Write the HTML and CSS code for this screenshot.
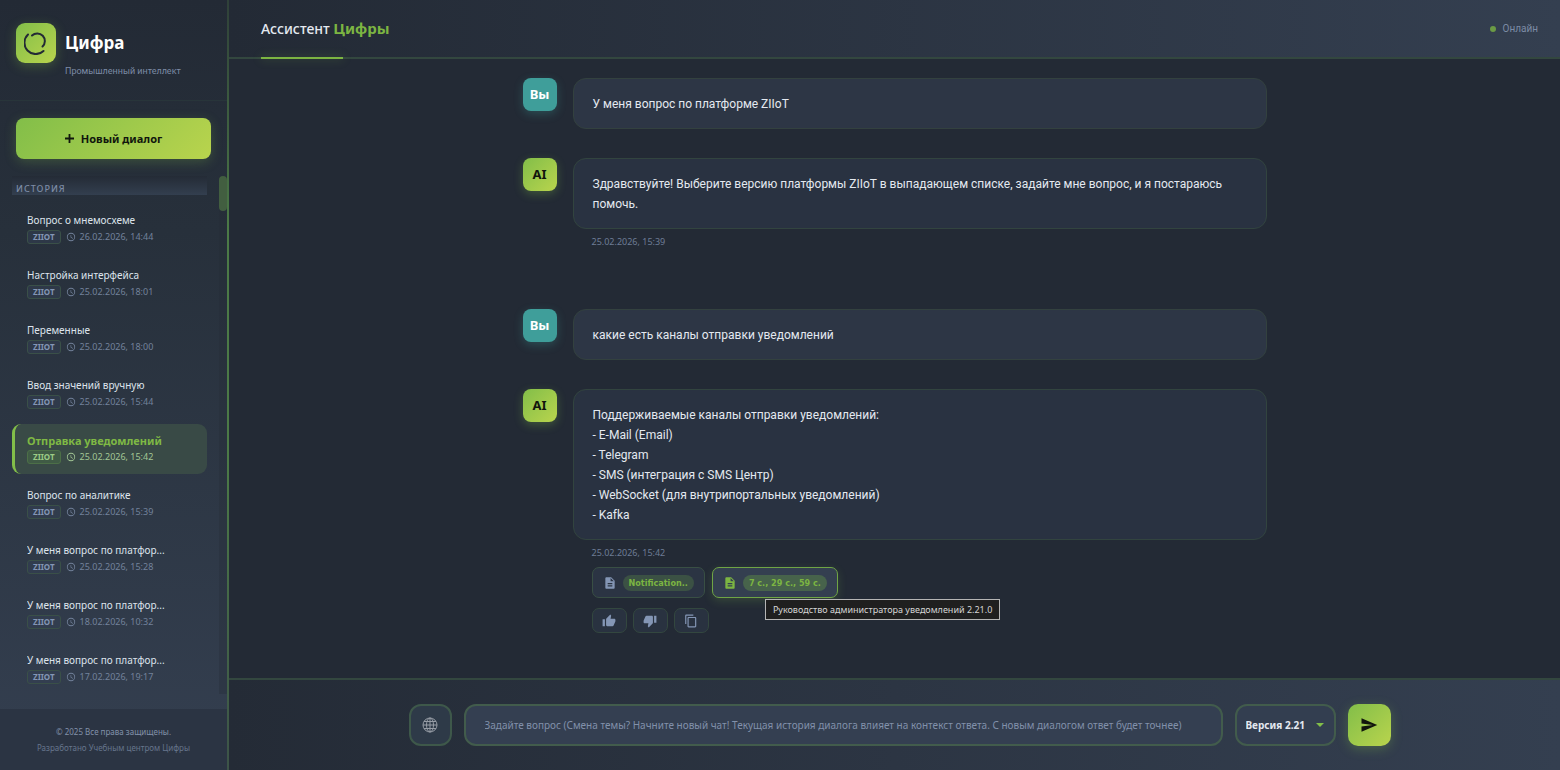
FILE: index.html
```html
<!DOCTYPE html>
<html lang="ru">
<head>
    <meta charset="UTF-8">
    <meta name="viewport" content="width=device-width, initial-scale=1.0">
    <title>Ассистент Цифры</title>
    <link rel="stylesheet" href="styles.css">
</head>
<body>
    <!-- Shared icons -->
    <svg class="sprite" aria-hidden="true">
        <symbol id="clock" viewBox="0 0 24 24"><path fill="currentColor" d="M12 2a10 10 0 1 0 0 20 10 10 0 0 0 0-20zm0 18a8 8 0 1 1 0-16 8 8 0 0 1 0 16zm.5-13H11v6l5.2 3.2.8-1.3-4.5-2.7z"/></symbol>
        <symbol id="doc" viewBox="0 0 24 24"><path fill="currentColor" d="M14 2H6c-1.100 0-2 .9-2 2v16c0 1.100.9 2 2 2h12c1.100 0 2-.9 2-2V8l-6-6zm2 16H8v-2h8v2zm0-4H8v-2h8v2zm-3-5V3.500L18.500 9H13z"/></symbol>
    </svg>

    <div class="app">
        <aside class="sidebar">
            <div class="sidebar-header">
                <div class="logo">
                    <svg width="24" height="24" viewBox="0 0 24 24" fill="none" stroke="#232a35" stroke-linecap="round">
                        <path stroke-width="2" d="M4 3.500A10 10 0 0 0 19.500 20"/>
                        <path stroke-width="2" d="M8 4.500A7.500 7.500 0 0 1 18.500 15.500"/>
                    </svg>
                </div>
                <div>
                    <h1 class="brand">Цифра</h1>
                    <p class="brand-sub">Промышленный интеллект</p>
                </div>
            </div>
            <div class="new-chat-wrap">
                <button class="new-chat-btn">
                    <svg width="9" height="9" viewBox="0 0 10 10"><path stroke="#11160d" stroke-width="2" d="M5 0v10M0 5h10"/></svg>
                    Новый диалог
                </button>
            </div>
            <div class="history">
                <div class="history-list">
                    <h2 class="history-title">История</h2>
                    <a class="history-item" href="#">
                        <span class="item-title">Вопрос о мнемосхеме</span>
                        <span class="item-meta"><span class="tag">ZIIOT</span><svg class="clock"><use href="#clock"/></svg>26.02.2026, 14:44</span>
                    </a>
                    <a class="history-item" href="#">
                        <span class="item-title">Настройка интерфейса</span>
                        <span class="item-meta"><span class="tag">ZIIOT</span><svg class="clock"><use href="#clock"/></svg>25.02.2026, 18:01</span>
                    </a>
                    <a class="history-item" href="#">
                        <span class="item-title">Переменные</span>
                        <span class="item-meta"><span class="tag">ZIIOT</span><svg class="clock"><use href="#clock"/></svg>25.02.2026, 18:00</span>
                    </a>
                    <a class="history-item" href="#">
                        <span class="item-title">Ввод значений вручную</span>
                        <span class="item-meta"><span class="tag">ZIIOT</span><svg class="clock"><use href="#clock"/></svg>25.02.2026, 15:44</span>
                    </a>
                    <a class="history-item active" href="#">
                        <span class="item-title">Отправка уведомлений</span>
                        <span class="item-meta"><span class="tag">ZIIOT</span><svg class="clock"><use href="#clock"/></svg>25.02.2026, 15:42</span>
                    </a>
                    <a class="history-item" href="#">
                        <span class="item-title">Вопрос по аналитике</span>
                        <span class="item-meta"><span class="tag">ZIIOT</span><svg class="clock"><use href="#clock"/></svg>25.02.2026, 15:39</span>
                    </a>
                    <a class="history-item" href="#">
                        <span class="item-title">У меня вопрос по платфор...</span>
                        <span class="item-meta"><span class="tag">ZIIOT</span><svg class="clock"><use href="#clock"/></svg>25.02.2026, 15:28</span>
                    </a>
                    <a class="history-item" href="#">
                        <span class="item-title">У меня вопрос по платфор...</span>
                        <span class="item-meta"><span class="tag">ZIIOT</span><svg class="clock"><use href="#clock"/></svg>18.02.2026, 10:32</span>
                    </a>
                    <a class="history-item" href="#">
                        <span class="item-title">У меня вопрос по платфор...</span>
                        <span class="item-meta"><span class="tag">ZIIOT</span><svg class="clock"><use href="#clock"/></svg>17.02.2026, 19:17</span>
                    </a>
                </div>
                <div class="scroll-track"><div class="scroll-thumb"></div></div>
            </div>
            <footer class="sidebar-footer">
                <p class="copyright">© 2025 Все права защищены.</p>
                <p class="developer">Разработано Учебным центром Цифры</p>
            </footer>
        </aside>

        <main class="main">
            <header class="chat-header">
                <h2 class="chat-title">Ассистент <span>Цифры</span></h2>
                <div class="status"><span class="status-dot"></span>Онлайн</div>
            </header>

            <div class="chat">
                <div class="messages">
                    <div class="message user">
                        <div class="avatar">Вы</div>
                        <div class="content">
                            <div class="bubble">У меня вопрос по платформе ZIIoT</div>
                        </div>
                    </div>
                    <div class="message ai">
                        <div class="avatar">AI</div>
                        <div class="content">
                            <div class="bubble">Здравствуйте! Выберите версию платформы ZIIoT в выпадающем списке, задайте мне вопрос, и я постараюсь помочь.</div>
                            <div class="time">25.02.2026, 15:39</div>
                        </div>
                    </div>
                    <div class="message user">
                        <div class="avatar">Вы</div>
                        <div class="content">
                            <div class="bubble">какие есть каналы отправки уведомлений</div>
                        </div>
                    </div>
                    <div class="message ai">
                        <div class="avatar">AI</div>
                        <div class="content">
                            <div class="bubble">Поддерживаемые каналы отправки уведомлений:<br>- E-Mail (Email)<br>- Telegram<br>- SMS (интеграция с SMS Центр)<br>- WebSocket (для внутрипортальных уведомлений)<br>- Kafka</div>
                            <div class="time">25.02.2026, 15:42</div>
                            <div class="sources">
                                <button class="source-btn"><svg class="doc"><use href="#doc"/></svg><span class="pages">Notification..</span></button>
                                <button class="source-btn hovered"><svg class="doc"><use href="#doc"/></svg><span class="pages">7 с., 29 с., 59 с.</span><span class="tooltip" role="tooltip">Руководство администратора уведомлений 2.21.0</span></button>
                            </div>
                            <div class="feedback">
                                <button class="icon-btn" aria-label="Нравится">
                                    <svg width="14" height="14" viewBox="0 0 24 24"><path fill="currentColor" d="M1 21h4V9H1v12zm22-11c0-1.100-.9-2-2-2h-6.310l.95-4.570.03-.32c0-.41-.17-.79-.44-1.060L14.170 1 7.590 7.590C7.220 7.950 7 8.450 7 9v10c0 1.100.9 2 2 2h9c.83 0 1.540-.5 1.840-1.220l3.020-7.050c.09-.23.14-.47.14-.73v-2z"/></svg>
                                </button>
                                <button class="icon-btn" aria-label="Не нравится">
                                    <svg width="14" height="14" viewBox="0 0 24 24"><path fill="currentColor" d="M15 3H6c-.83 0-1.540.5-1.840 1.220l-3.020 7.050c-.09.23-.14.47-.14.73v2c0 1.100.9 2 2 2h6.310l-.95 4.570-.03.32c0 .41.17.79.44 1.060L9.830 23l6.590-6.590c.36-.36.58-.86.58-1.410V5c0-1.100-.9-2-2-2zm4 0v12h4V3h-4z"/></svg>
                                </button>
                                <button class="icon-btn" aria-label="Копировать">
                                    <svg width="14" height="14" viewBox="0 0 24 24"><path fill="currentColor" d="M16 1H4c-1.100 0-2 .9-2 2v14h2V3h12V1zm3 4H8c-1.100 0-2 .9-2 2v14c0 1.100.9 2 2 2h11c1.100 0 2-.9 2-2V7c0-1.100-.9-2-2-2zm0 16H8V7h11v14z"/></svg>
                                </button>
                            </div>
                        </div>
                    </div>
                </div>
            </div>

            <div class="input-area">
                <form class="input-form">
                    <button type="button" class="globe-btn" aria-label="Поиск">
                        <svg width="16" height="16" viewBox="0 0 16 16" fill="none" stroke="#969ca5">
                            <circle cx="8" cy="8" r="7"/>
                            <ellipse cx="8" cy="8" rx="3.500" ry="7"/>
                            <path d="M8 1v14M1 8h14M2 4.500h12M2 11.500h12"/>
                        </svg>
                    </button>
                    <input type="text" class="question" aria-label="Вопрос" placeholder="Задайте вопрос (Смена темы? Начните новый чат! Текущая история диалога влияет на контекст ответа. С новым диалогом ответ будет точнее)">
                    <div class="version">
                        <select class="version-select" aria-label="Версия">
                            <option>Версия 2.21</option>
                        </select>
                        <svg class="version-arrow" width="8" height="4" viewBox="0 0 8 4"><path fill="#82be49" d="M0 0h8L4 4z"/></svg>
                    </div>
                    <button type="button" class="send-btn" aria-label="Отправить">
                        <svg width="18" height="18" viewBox="0 0 24 24"><path fill="#11160d" d="M2 21l21-9L2 3v7l15 2-15 2z"/></svg>
                    </button>
                </form>
            </div>
        </main>
    </div>
</body>
</html>
```
FILE: styles.css
```css
* {
    box-sizing: border-box;
    margin: 0;
    padding: 0;
}

body {
    font-family: "Noto Sans", sans-serif;
    font-size: 12px;
    color: #e4e9f0;
    background-color: #232a35;
}

button, input, select {
    font-family: inherit;
    cursor: pointer;
}

.sprite {
    display: none;
}

.app {
    display: flex;
    min-height: 100vh;
}

/* Sidebar */
.sidebar {
    display: flex;
    flex-direction: column;
    width: 229px;
    flex-shrink: 0;
    background: linear-gradient(180deg, #232a35 0%, #27303b 30%, #343f50 100%);
    border-right: 2px solid;
    border-image: linear-gradient(180deg, #2f4039, #4c7a47 30%, #4c7a47 60%, #3c5348) 1;
}

.sidebar-header {
    display: flex;
    gap: 9px;
    height: 101px;
    padding: 23px 16px 0;
    border-bottom: 1px solid #28353a;
}

.logo {
    display: flex;
    align-items: center;
    justify-content: center;
    width: 40px;
    height: 40px;
    border-radius: 9px;
    background: linear-gradient(135deg, #82be49, #b9d44d);
    box-shadow: 0 3px 12px rgba(130, 190, 73, 0.3);
}

.brand {
    font-size: 17px;
    line-height: 40px;
    color: #fff;
}

.brand-sub {
    font-family: Roboto, sans-serif;
    font-size: 9px;
    line-height: 16px;
    color: #7c8ba5;
}

.new-chat-wrap {
    padding: 17px 16px;
}

.new-chat-btn {
    display: flex;
    align-items: center;
    justify-content: center;
    gap: 7px;
    width: 100%;
    height: 41px;
    border: none;
    border-radius: 8px;
    background: linear-gradient(135deg, #82be49, #b9d44d);
    box-shadow: 0 3px 12px rgba(130, 190, 73, 0.25);
    font-size: 11px;
    font-weight: bold;
    color: #11160d;
}

.history {
    display: flex;
    flex: 1;
    margin-bottom: 15px;
}

.history-list {
    display: flex;
    flex: 1;
    flex-direction: column;
    gap: 5px;
    min-width: 0;
    padding: 0 12px;
}

.history-title {
    margin-bottom: 4px;
    padding: 6px 4px 0;
    background: linear-gradient(180deg, #242b36, #333f4f);
    font-size: 9px;
    font-weight: 500;
    line-height: 13px;
    letter-spacing: 1px;
    text-transform: uppercase;
    color: #7c8ba5;
}

.history-item {
    display: flex;
    flex-direction: column;
    height: 50px;
    padding: 8px 12px;
    border-left: 3px solid transparent;
    border-radius: 9px;
    color: #73829b;
    text-decoration: none;
}

.item-title {
    overflow: hidden;
    font-size: 10px;
    line-height: 17px;
    white-space: nowrap;
    color: #dde3ec;
}

.item-meta {
    display: flex;
    align-items: center;
    font-size: 9px;
    line-height: 16px;
}

.tag {
    margin-right: 5px;
    padding: 0 5px;
    border: 1px solid #3a5048;
    border-radius: 3px;
    background-color: rgba(52, 64, 84, 0.5);
    font-size: 8px;
    font-weight: bold;
    line-height: 12px;
    color: #8496b5;
}

.clock {
    width: 10px;
    height: 10px;
    margin-right: 4px;
}

.history-item.active {
    border-left-color: #82be49;
    background-color: #394a46;
    color: #a3c795;
}

.active .item-title {
    font-size: 11px;
    font-weight: bold;
    color: #7fb944;
}

.active .tag {
    border-color: #4c6f47;
    background-color: #405b45;
    color: #9ccb85;
}

.scroll-track {
    width: 8px;
    background-color: rgba(35, 42, 53, 0.3);
}

.scroll-thumb {
    height: 35px;
    border-radius: 4px;
    background-color: #425e40;
}

.sidebar-footer {
    height: 61px;
    padding-top: 15px;
    background-color: #2b3443;
    text-align: center;
    font-size: 8px;
    line-height: 16px;
}

.copyright {
    color: #8291aa;
}

.developer {
    color: #66758c;
}

/* Main */
.main {
    display: flex;
    flex: 1;
    flex-direction: column;
    min-width: 0;
}

.chat-header {
    display: flex;
    align-items: center;
    justify-content: space-between;
    height: 59px;
    padding: 0 22px 0 32px;
    border-bottom: 2px solid #33473f;
    background: linear-gradient(90deg, #232a35, #343f50);
}

.chat-title {
    position: relative;
    height: 57px;
    font-size: 14px;
    font-weight: 500;
    line-height: 57px;
    color: #e4e9f0;
}

.chat-title::after {
    content: "";
    position: absolute;
    left: 0;
    bottom: -2px;
    width: 82px;
    height: 2px;
    background-color: #7cb542;
    box-shadow: 0 0 10px rgba(130, 190, 73, 0.4);
}

.chat-title span {
    font-size: 15px;
    font-weight: bold;
    color: #7cb542;
}

.status {
    display: flex;
    align-items: center;
    gap: 7px;
    font-family: Roboto, sans-serif;
    font-size: 10px;
    color: #7c8ba5;
}

.status-dot {
    width: 6px;
    height: 6px;
    border-radius: 50%;
    background-color: #6b9a45;
}

.chat {
    flex: 1;
    padding: 19px 32px;
}

.messages {
    display: flex;
    flex-direction: column;
    gap: 29px;
    max-width: 744px;
    margin: 0 auto;
}

.message {
    display: flex;
    gap: 16px;
}

.message.ai {
    min-height: 122px;
}

.avatar {
    width: 34px;
    height: 33px;
    border-radius: 8px;
    font-size: 13px;
    font-weight: bold;
    line-height: 33px;
    text-align: center;
}

.user .avatar {
    background-color: #3f9e9a;
    box-shadow: 0 3px 10px rgba(63, 158, 154, 0.3);
    color: #fff;
}

.ai .avatar {
    background: linear-gradient(135deg, #82be49, #b9d44d);
    box-shadow: 0 3px 10px rgba(130, 190, 73, 0.3);
    color: #11160d;
}

.content {
    flex: 1;
    min-width: 0;
}

.bubble {
    padding: 15px 19px 14px;
    border: 1px solid #32443f;
    border-radius: 13px;
    background-color: #293241;
    font-family: Roboto, sans-serif;
    font-size: 12px;
    line-height: 20px;
}

.user .bubble {
    border-color: #33413f;
    background-color: #2d3645;
}

.time {
    padding: 5px 19px;
    font-size: 9px;
    line-height: 16px;
    color: #6e7d96;
}

.sources {
    display: flex;
    gap: 7px;
    margin: 1px 19px 10px;
}

.source-btn {
    position: relative;
    display: flex;
    align-items: center;
    gap: 6px;
    height: 31px;
    padding: 0 10px;
    border: 1px solid #394f44;
    border-radius: 7px;
    background-color: #2b3443;
    color: #8496b5;
}

.doc {
    width: 14px;
    height: 14px;
}

.pages {
    padding: 0 6px;
    border-radius: 8px;
    background-color: #3b5144;
    font-family: "DejaVu Sans Condensed", "DejaVu Sans", sans-serif;
    font-size: 9px;
    font-weight: bold;
    line-height: 16px;
    color: #7cb542;
}

.source-btn.hovered {
    border-color: #6fa445;
    background-color: #343f50;
    box-shadow: 0 3px 10px rgba(130, 190, 73, 0.2);
    color: #7cb542;
}

.hovered .pages {
    background-color: #47634b;
}

.tooltip {
    position: absolute;
    top: 31px;
    left: 52px;
    z-index: 2;
    padding: 0 7px;
    border: 1px solid #b5b5b5;
    background-color: #1f1f1f;
    font-size: 9px;
    line-height: 19px;
    white-space: nowrap;
    color: #d5d5d5;
}

.feedback {
    display: flex;
    gap: 6px;
    margin: 0 19px;
}

.icon-btn {
    display: flex;
    align-items: center;
    justify-content: center;
    width: 35px;
    height: 25px;
    border: 1px solid #33473f;
    border-radius: 7px;
    background-color: #293240;
    color: #8496b5;
}

/* Input */
.input-area {
    padding: 24px 32px 24px 42px;
    border-top: 2px solid #33473f;
    background: linear-gradient(90deg, #242b36, #343f50);
}

.input-form {
    display: flex;
    gap: 12px;
    max-width: 982px;
    margin: 0 auto;
}

.globe-btn {
    display: flex;
    align-items: center;
    justify-content: center;
    width: 43px;
    height: 42px;
    border: 2px solid #3e584a;
    border-radius: 12px;
    background-color: #2e3a48;
}

.question {
    flex: 1;
    min-width: 0;
    height: 42px;
    padding: 0 19px;
    border: 2px solid #425c4c;
    border-radius: 12px;
    background-color: #343f51;
    font-size: 10px;
    color: #e4e9f0;
}

.question::placeholder {
    color: #8190aa;
}

.version {
    position: relative;
    width: 101px;
}

.version-select {
    width: 100%;
    height: 42px;
    padding: 0 9px;
    border: 2px solid #425c4c;
    border-radius: 12px;
    background-color: #333e50;
    font-size: 10px;
    font-weight: bold;
    color: #e4e9f0;
    appearance: none;
}

.version-arrow {
    position: absolute;
    top: 19px;
    right: 12px;
    pointer-events: none;
}

.send-btn {
    display: flex;
    align-items: center;
    justify-content: center;
    width: 43px;
    height: 42px;
    border: none;
    border-radius: 10px;
    background: linear-gradient(135deg, #82be49, #b9d44d);
    box-shadow: 0 3px 12px rgba(130, 190, 73, 0.3);
}
```
